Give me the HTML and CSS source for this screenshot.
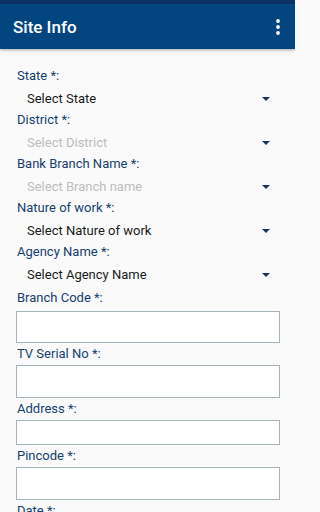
FILE: index.html
```html
<!DOCTYPE html>
<html>
<head>
<meta charset="utf-8">
<meta name="viewport" content="width=295">
<link rel="stylesheet" href="styles.css">
</head>
<body>
<div class="page">
<div class="status"></div>
<header class="appbar">
  <h1 class="title">Site Info</h1>
  <svg class="menu" width="4" height="16" viewBox="0 0 4 16"><circle cx="2" cy="2" r="1.9" fill="#fff"/><circle cx="2" cy="8" r="1.9" fill="#fff"/><circle cx="2" cy="14" r="1.9" fill="#fff"/></svg>
</header>
<main class="form">
  <div class="label">State *:</div>
  <div class="select"><span>Select State</span><i class="arrow"></i></div>
  <div class="label">District *:</div>
  <div class="select placeholder"><span>Select District</span><i class="arrow"></i></div>
  <div class="label">Bank Branch Name *:</div>
  <div class="select placeholder"><span>Select Branch name</span><i class="arrow"></i></div>
  <div class="label">Nature of work *:</div>
  <div class="select"><span>Select Nature of work</span><i class="arrow"></i></div>
  <div class="label">Agency Name *:</div>
  <div class="select"><span>Select Agency Name</span><i class="arrow"></i></div>
  <div class="label first-field">Branch Code *:</div>
  <div class="input first"></div>
  <div class="label">TV Serial No *:</div>
  <div class="input tall"></div>
  <div class="label">Address *:</div>
  <div class="input short"></div>
  <div class="label">Pincode *:</div>
  <div class="input tall"></div>
  <div class="label">Date *:</div>
</main>
</div>
</body>
</html>
```
FILE: styles.css
```css
html, body {
  margin: 0;
  padding: 0;
  background: #fafafa;
  font-family: Roboto, "Liberation Sans", sans-serif;
  overflow: hidden;
  height: 512px;
}
.page {
  width: 295px;
  height: 512px;
  overflow: hidden;
  background: #fafafa;
}
.status {
  height: 4px;
  background: #0b3466;
}
.appbar {
  height: 45px;
  background: #03457f;
  display: flex;
  align-items: center;
  justify-content: space-between;
  padding: 0 15px 0 13px;
  box-shadow: 0 1px 3px rgba(0,0,0,0.35);
  position: relative;
}
.title {
  margin: 0;
  color: #fff;
  font-size: 17px;
  font-weight: 500;
}
.menu {
  display: block;
  margin-top: 1px;
}
.form {
  padding: 16px 15px 0 16px;
}
.label {
  height: 22px;
  line-height: 22px;
  font-size: 13px;
  color: #163f6f;
  padding-left: 1px;
}
.select {
  height: 22px;
  display: flex;
  align-items: center;
  justify-content: space-between;
  padding: 0 10px 0 11px;
  font-size: 13px;
  color: #1a1a1a;
}
.select.placeholder {
  color: #bdbdbd;
}
.arrow {
  width: 0;
  height: 0;
  border-left: 4px solid transparent;
  border-right: 4px solid transparent;
  border-top: 4px solid #1b3558;
  margin-top: 1px;
}
.first-field {
  margin-top: 2px;
}
.input {
  box-sizing: border-box;
  background: #fff;
  border: 1.5px solid #a6b4bb;
}
.input.first {
  margin-top: 2px;
  height: 32px;
}
.input.tall {
  height: 33px;
}
.input.short {
  height: 25px;
}
```
